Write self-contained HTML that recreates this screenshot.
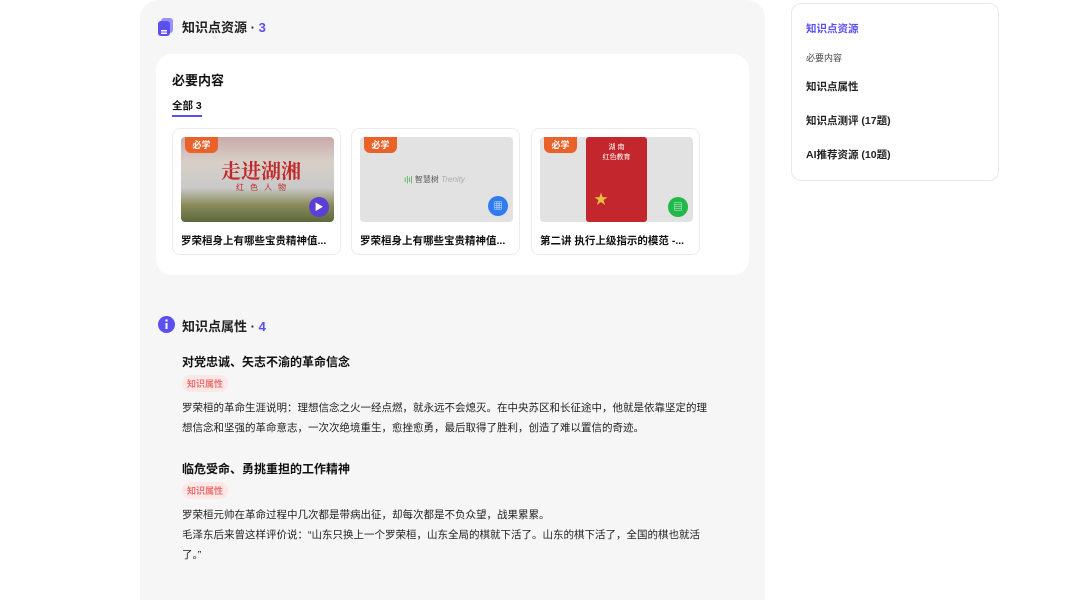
<!DOCTYPE html>
<html><head><meta charset="utf-8"><style>
*{margin:0;padding:0;box-sizing:border-box}
body{width:1080px;height:569px;background:#fff;font-family:"Liberation Sans","Noto Sans CJK SC",sans-serif;position:relative;overflow:hidden;color:#111}
.main{position:absolute;left:140px;top:0;width:625px;height:600px;background:#f6f6f6;border-radius:18px 18px 0 0}
.abs{position:absolute}
.h{font-size:13px;font-weight:bold;color:#222}
.h b{color:#5b4ff0}
.card{position:absolute;top:128px;width:169px;height:127px;background:#fff;border:1px solid #ececec;border-radius:8px}
.img{position:absolute;left:8px;top:8px;width:153px;height:85px;background:#e2e2e2;border-radius:4px;overflow:hidden}
.tag{position:absolute;left:0;top:0;width:33px;height:16px;background:#e8622a;color:#fff;font-size:9px;font-weight:bold;text-align:center;line-height:16px;border-radius:0 0 6px 6px;margin-left:4px}
.ct{position:absolute;left:8px;top:104px;font-size:10.5px;font-weight:bold;white-space:nowrap}
.ic{position:absolute;width:20px;height:20px;border-radius:50%;color:#fff;font-size:9px;text-align:center;line-height:20px}
.t{font-size:12px;font-weight:bold;color:#111}
.pill{font-size:9px;color:#f07070;background:#fde8e8;border-radius:8px;padding:2px 5px;display:inline-block;font-weight:bold}
.p{font-size:10.5px;line-height:20px;color:#222;width:530px}
.nav{position:absolute;left:791px;top:3px;width:208px;height:178px;border:1px solid #e8e8ee;border-radius:10px;background:#fff}
.nav div{position:absolute;left:14px;font-size:10.5px;font-weight:bold;color:#222}
</style></head><body>
<div class="main">
 <svg class="abs" style="left:18px;top:18px" width="16" height="18" viewBox="0 0 16 18"><rect x="3" y="0" width="12" height="15" rx="3" fill="#9b92f5"/><rect x="0" y="3" width="12" height="15" rx="3" fill="#5b4ff0"/><rect x="3" y="12" width="6" height="1.5" fill="#fff"/><rect x="3" y="14.5" width="6" height="1.5" fill="#fff"/></svg>
 <div class="abs h" style="left:42px;top:17px">知识点资源 · <b>3</b></div>
 <div class="abs" style="left:16px;top:54px;width:593px;height:221px;background:#fff;border-radius:16px"></div>
 <div class="abs" style="left:32px;top:70px;font-size:13px;font-weight:bold">必要内容</div>
 <div class="abs" style="left:32px;top:98px;font-size:10.5px;font-weight:bold">全部 3</div>
 <div class="abs" style="left:32px;top:115px;width:30px;height:2px;background:#5b4ff0"></div>
 <div class="card" style="left:32px"><div class="img" style="background:linear-gradient(180deg,#c9a9a9 0%,#d8d0c8 30%,#c9c9c9 60%,#8a8a5a 80%,#5a6a3a 100%)"><div class="abs" style="left:40px;top:18px;font-size:20px;color:#c0282a;font-family:'Noto Serif CJK SC',serif;font-weight:bold">走进湖湘</div><div class="abs" style="left:55px;top:45px;font-size:8px;color:#c0282a;letter-spacing:6px">红色人物</div></div><div class="tag" style="left:8px;top:8px">必学</div><div class="ic" style="left:136px;top:68px;background:#5b3fd6">▶</div><div class="ct">罗荣桓身上有哪些宝贵精神值...</div></div>
 <div class="card" style="left:211px"><div class="img"><div class="abs" style="left:44px;top:37px;font-size:8px;color:#555"><span style="color:#3a3">ı|ı|</span> 智慧树 <i style="color:#aaa">Trenity</i></div></div><div class="tag" style="left:8px;top:8px">必学</div><div class="ic" style="left:136px;top:67px;background:#2f7cf0">▦</div><div class="ct">罗荣桓身上有哪些宝贵精神值...</div></div>
 <div class="card" style="left:391px"><div class="img"><div class="abs" style="left:46px;top:0;width:61px;height:85px;background:#c4262d;border-radius:3px"><div style="color:#fff;font-size:7px;text-align:center;margin-top:6px;line-height:10px">湖 南<br>红色教育</div><div style="position:absolute;left:8px;top:52px;color:#e8c040;font-size:14px">★</div></div></div><div class="tag" style="left:8px;top:8px">必学</div><div class="ic" style="left:136px;top:68px;background:#22b84a">▤</div><div class="ct">第二讲 执行上级指示的模范 -...</div></div>
 <svg class="abs" style="left:18px;top:316px" width="17" height="17"><circle cx="8.5" cy="8.5" r="8.5" fill="#5b4ff0"/><rect x="7.5" y="7" width="2" height="6" fill="#fff"/><circle cx="8.5" cy="4.5" r="1.2" fill="#fff"/></svg>
 <div class="abs h" style="left:42px;top:316px">知识点属性 · <b>4</b></div>
 <div class="abs t" style="left:42px;top:353px">对党忠诚、矢志不渝的革命信念</div>
 <div class="abs" style="left:42px;top:374px"><span class="pill">知识属性</span></div>
 <div class="abs p" style="left:42px;top:398px">罗荣桓的革命生涯说明：理想信念之火一经点燃，就永远不会熄灭。在中央苏区和长征途中，他就是依靠坚定的理想信念和坚强的革命意志，一次次绝境重生，愈挫愈勇，最后取得了胜利，创造了难以置信的奇迹。</div>
 <div class="abs t" style="left:42px;top:460px">临危受命、勇挑重担的工作精神</div>
 <div class="abs" style="left:42px;top:481px"><span class="pill">知识属性</span></div>
 <div class="abs p" style="left:42px;top:505px">罗荣桓元帅在革命过程中几次都是带病出征，却每次都是不负众望，战果累累。<br>毛泽东后来曾这样评价说：“山东只换上一个罗荣桓，山东全局的棋就下活了。山东的棋下活了，全国的棋也就活了。”</div>
</div>
<div class="abs" style="left:791px;top:24px;width:0;height:0;border-left:6px solid #8a80f5;border-top:4px solid transparent;border-bottom:4px solid transparent"></div>
<div class="nav">
 <div style="top:17px;color:#5b4ff0">知识点资源</div>
 <div style="top:47px;font-size:9px;font-weight:normal;color:#444">必要内容</div>
 <div style="top:75px">知识点属性</div>
 <div style="top:109px">知识点测评 (17题)</div>
 <div style="top:143px">AI推荐资源 (10题)</div>
</div>
</body></html>
